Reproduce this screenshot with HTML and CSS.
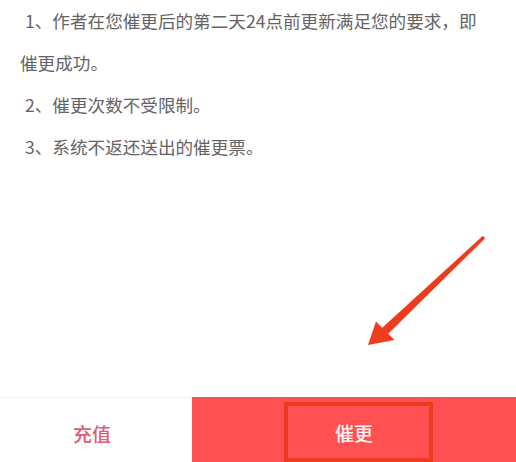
FILE: index.html
```html
<!DOCTYPE html>
<html lang="zh-CN">
<head>
<meta charset="utf-8">
<title>催更说明</title>
<link rel="stylesheet" href="styles.css">
</head>
<body>
<div class="page">
  <div class="rules">
    <p class="rule">1、作者在您催更后的第二天24点前更新满足您的要求，即催更成功。</p>
    <p class="rule">2、催更次数不受限制。</p>
    <p class="rule">3、系统不返还送出的催更票。</p>
  </div>
  <div class="bar">
    <div class="btn recharge">充值</div>
    <div class="btn urge">催更</div>
  </div>
  <div class="highlight"></div>
  <svg class="arrow" width="516" height="462" viewBox="0 0 516 462" xmlns="http://www.w3.org/2000/svg">
    <circle cx="483" cy="238" r="1.7" fill="#e8391c"/>
    <polygon points="481.8,236.8 484.2,239.2 388,334 382,328" fill="#ec3b1d"/>
    <polygon points="368,345 376,321.5 394.5,340" fill="#f03c1e"/>
  </svg>
</div>
</body>
</html>
```

FILE: styles.css
```css
html, body {
  margin: 0;
  padding: 0;
  background: #ffffff;
}

.page {
  position: relative;
  width: 516px;
  height: 462px;
  overflow: hidden;
  display: flex;
  flex-direction: column;
  font-family: "Noto Sans CJK SC", "Noto Sans", sans-serif;
}

.rules {
  flex: 1;
  padding: 0 30px 0 20px;
}

.rule {
  margin: 0;
  font-size: 17.6px;
  line-height: 42px;
  color: #646464;
  text-indent: 5px;
}

.bar {
  height: 64px;
  display: flex;
  border-top: 1px solid #f0f0f0;
}

.btn {
  display: flex;
  align-items: center;
  justify-content: center;
  padding-top: 6px;
  box-sizing: border-box;
  font-size: 19px;
  font-weight: 500;
}

.recharge {
  width: 192px;
  padding-right: 8px;
  color: #dc5c78;
  background: #ffffff;
}

.urge {
  flex: 1;
  background: #ff5152;
  color: #fff3f3;
  margin-top: -1px;
}

.highlight {
  position: absolute;
  left: 284px;
  top: 402px;
  width: 149px;
  height: 60px;
  box-sizing: border-box;
  border: 4px solid #ee3a20;
}

.arrow {
  position: absolute;
  left: 0;
  top: 0;
}
```
